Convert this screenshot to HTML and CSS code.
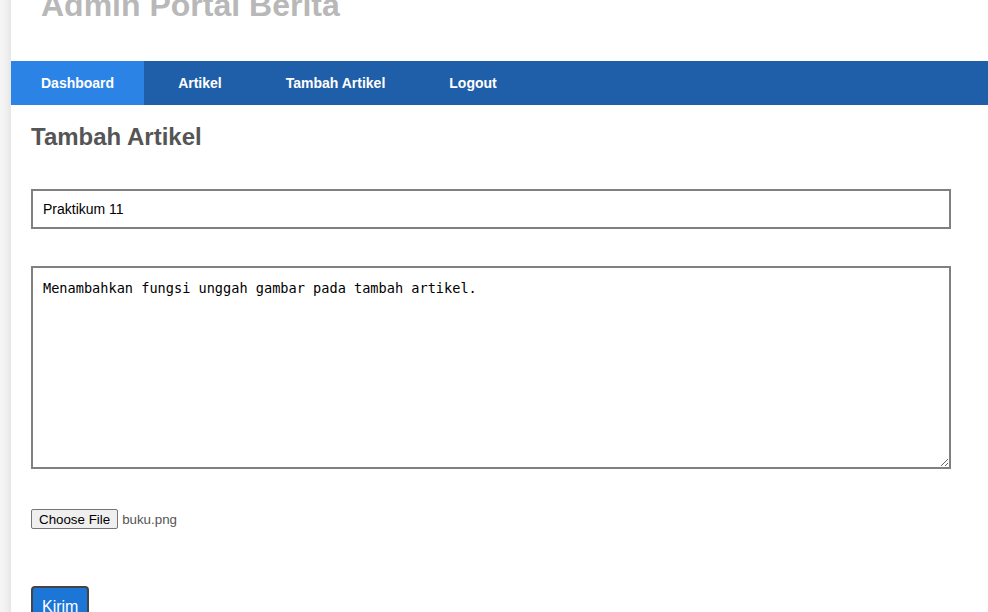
FILE: index.html
```html
<!DOCTYPE html>
<html lang="id">
<head>
<meta charset="utf-8">
<title>Admin Portal Berita</title>
<link rel="stylesheet" href="styles.css">
</head>
<body>
<div class="container">
  <header class="site-header">
    <h1 class="site-title">Admin Portal Berita</h1>
  </header>
  <nav class="main-nav">
    <a href="#" class="nav-link active">Dashboard</a>
    <a href="#" class="nav-link">Artikel</a>
    <a href="#" class="nav-link">Tambah Artikel</a>
    <a href="#" class="nav-link">Logout</a>
  </nav>
  <section class="content">
    <h2 class="page-title">Tambah Artikel</h2>
    <form class="article-form">
      <input class="field" type="text" value="Praktikum 11">
      <textarea class="field area">Menambahkan fungsi unggah gambar pada tambah artikel.</textarea>
      <div class="file-row">
        <button type="button" class="file-btn">Choose File</button>
        <span class="file-name">buku.png</span>
      </div>
      <button type="button" class="submit-btn">Kirim</button>
    </form>
  </section>
</div>
</body>
</html>
```
FILE: styles.css
```css
html, body {
  margin: 0;
  padding: 0;
  overflow: hidden;
  height: 100%;
}
body {
  background: #f5f5f5;
  font-family: "Liberation Sans", Arial, sans-serif;
}
.container {
  margin-left: 11px;
  width: 1000px;
  min-height: 100%;
  background: #fff;
  box-shadow: 0 0 10px rgba(0, 0, 0, 0.12);
}
.site-header {
  padding: 0 30px;
}
.site-title {
  margin: -13px 0 0;
  padding-bottom: 37px;
  font-size: 32px;
  line-height: 37px;
  font-weight: bold;
  color: #b8b8b8;
}
.main-nav {
  display: flex;
  gap: 4px;
  background: #1f5ea8;
}
.nav-link {
  display: block;
  padding: 14px 30px;
  font-size: 14px;
  line-height: 16px;
  font-weight: bold;
  color: #fff;
  text-decoration: none;
}
.nav-link.active {
  background: #2b83e6;
}
.content {
  padding: 0 20px;
}
.page-title {
  margin: 18px 0 0;
  font-size: 24px;
  line-height: 28px;
  font-weight: bold;
  color: #555;
}
.article-form {
  display: flex;
  flex-direction: column;
  align-items: flex-start;
  padding-top: 38px;
}
.field {
  box-sizing: border-box;
  width: 920px;
  height: 40px;
  margin: 0;
  padding: 10px;
  border: 2px solid #808080;
  font-family: "Liberation Sans", Arial, sans-serif;
  font-size: 14px;
  line-height: 16px;
  color: #000;
  background: #fff;
}
.field.area {
  margin-top: 37px;
  height: 203px;
  padding: 12px 10px;
  font-family: "DejaVu Sans Mono", "Liberation Mono", monospace;
  font-size: 13.6px;
  line-height: 16px;
  resize: vertical;
}
.file-row {
  display: flex;
  align-items: center;
  margin-top: 40px;
  height: 20px;
}
.file-btn {
  box-sizing: border-box;
  height: 20px;
  margin: 0 4px 0 0;
  padding: 0 7px;
  border: 1px solid #767676;
  border-radius: 2px;
  background: #efefef;
  font-family: "Liberation Sans", Arial, sans-serif;
  font-size: 13.33px;
  color: #000;
}
.file-name {
  font-size: 13.33px;
  color: #555;
}
.submit-btn {
  margin-top: 57px;
  padding: 10px 9px;
  border: 2px solid #444;
  border-radius: 4px;
  background: #1c76d8;
  color: #fff;
  font-family: "Liberation Sans", Arial, sans-serif;
  font-size: 16px;
  line-height: 18px;
}
```
